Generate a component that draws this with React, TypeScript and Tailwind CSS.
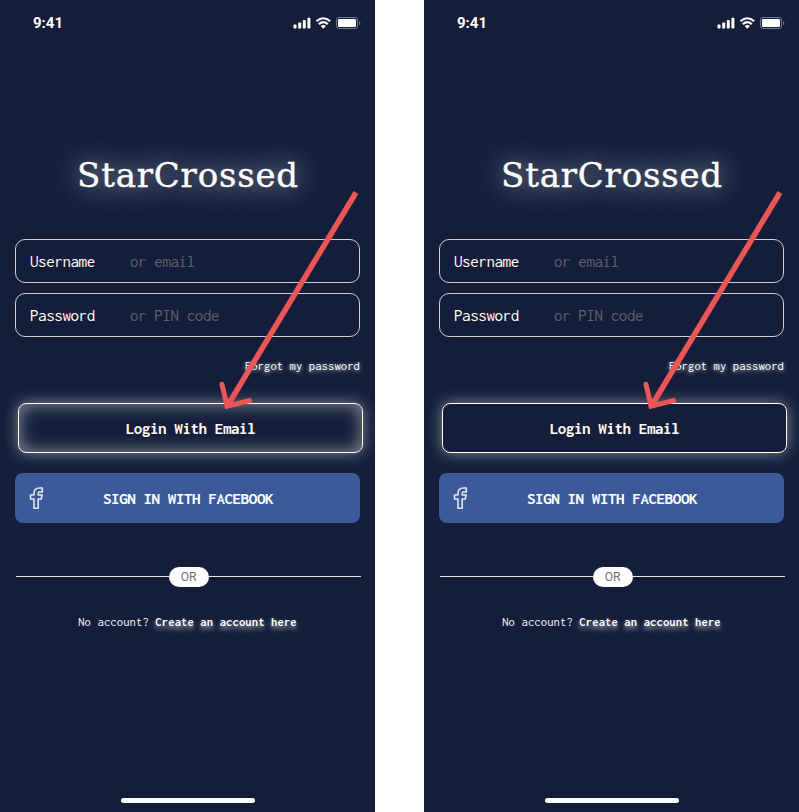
import React from "react";

const mono =
  "font-['Inconsolata','Noto_Sans_Mono_CJK_JP','Noto_Sans_Mono_CJK_SC','DejaVu_Sans_Mono',monospace]";

function StatusBar() {
  return (
    <div className="flex h-[46px] items-center justify-between pl-[33px] pr-[14px]">
      <span className="font-[Roboto,sans-serif] text-[15px] font-bold leading-none">9:41</span>
      <svg width="68" height="14" viewBox="0 0 68 14" fill="none">
        <g fill="#fff">
          <rect x="0.5" y="8.5" width="3" height="4" rx="0.8" />
          <rect x="5.2" y="6.4" width="3" height="6.1" rx="0.8" />
          <rect x="9.8" y="4" width="3" height="8.5" rx="0.8" />
          <rect x="14.4" y="1.8" width="3" height="10.7" rx="0.8" />
        </g>
        <g stroke="#fff" strokeWidth="2.100">
          <path d="M23.400 5.300Q30.300-.8 37.200 5.300" />
          <path d="M25.800 8.100Q30.300 4.200 34.800 8.100" />
        </g>
        <path d="M27.700 10.100Q30.300 8.100 32.900 10.100L30.300 12.800z" fill="#fff" />
        <rect x="43.500" y="1.500" width="21" height="11" rx="2.500" stroke="#fff" strokeOpacity=".4" />
        <path d="M66 5.300v4c.8-.3 1.300-1.100 1.300-2s-.5-1.700-1.300-2z" fill="#fff" fillOpacity=".4" />
        <rect x="45" y="3" width="18" height="8" rx="1.300" fill="#fff" />
      </svg>
    </div>
  );
}

function Field({ label, hint }: { label: string; hint: string }) {
  return (
    <div className="flex h-11 items-center rounded-[10px] border border-[#cdced3] pl-[14px] text-[17px] leading-none tracking-[-0.4px]">
      <span className="w-[100px]">{label}</span>
      <span className="text-[#5c5f6a]">{hint}</span>
    </div>
  );
}

function Arrow() {
  return (
    <svg className="absolute left-0 top-0" width="375" height="420" fill="none" stroke="#ee5656">
      <path d="M356 192.500L228 405" strokeWidth="5.500" />
      <path d="M222 384.300L227 406.300L249.500 400.500" strokeWidth="5" strokeLinecap="round" />
    </svg>
  );
}

function Phone({ inset }: { inset: boolean }) {
  return (
    <section className={`${mono} relative flex h-[812px] w-[375px] flex-col overflow-hidden bg-[#141e3b] text-white`}>
      <StatusBar />
      <h1 className="mt-[104px] flex h-[50px] items-center justify-center whitespace-nowrap pl-px font-['DejaVu_Serif',serif] text-[34px] leading-none tracking-[0.8px] [-webkit-text-stroke:0.4px_white] [text-shadow:0_0_30px_rgba(255,255,255,0.8),0_0_20px_rgba(255,255,255,0.2)]">
        StarCrossed
      </h1>
      <div className="mx-[15px] mt-[39px] flex flex-col gap-[10px]">
        <Field label="Username" hint="or email" />
        <Field label="Password" hint="or PIN code" />
      </div>
      <a className="mr-[15px] mt-[19px] flex h-5 items-center justify-end text-[12.500px] leading-none tracking-[0.150px] [text-shadow:0_1px_4px_rgba(255,255,255,0.8)]">
        Forgot my password
      </a>
      <button
        className={`ml-[18px] mt-[27px] h-[50px] w-[345px] rounded-lg border border-white text-[17px] font-bold leading-none tracking-[-0.4px] ${
          inset
            ? "shadow-[0_0_15px_rgba(255,255,245,0.48),inset_0_0_18px_rgba(255,255,245,0.52)]"
            : "shadow-[0_0_15px_rgba(255,255,245,0.48)]"
        }`}
      >
        Login With Email
      </button>
      <button className="mx-[15px] mt-5 flex h-[50px] items-center rounded-lg bg-[#3c5a99] text-[17px] font-bold leading-none tracking-[-0.4px]">
        <svg className="ml-[14px]" width="15" height="24" viewBox="0 0 15 24" fill="none" stroke="#e3e8f2" strokeWidth="1.600" strokeLinejoin="round">
          <path d="M13.300 2H10.500C7.200 2 5 4 5 7.200V9H1.500v4H5v9.300h4.200V13h3l1-4H9.200V7.500C9.200 6.500 9.700 6 10.700 6h2.600z" />
        </svg>
        <span className="ml-[59px]">SIGN IN WITH FACEBOOK</span>
      </button>
      <div className="ml-4 mt-11 flex h-5 w-[345px] items-center">
        <span className="mb-px h-px flex-1 bg-[#e4e5ea]" />
        <span className="flex h-5 w-10 items-center justify-center rounded-full bg-white font-[Roboto,sans-serif] text-[12px] leading-none tracking-[-0.2px] text-[#6b6e79]">
          OR
        </span>
        <span className="mb-px h-px flex-1 bg-[#e4e5ea]" />
      </div>
      <p className="mt-[25px] flex h-5 items-center justify-center whitespace-pre text-[12.500px] leading-none tracking-[0.180px]">
        <span>No account? </span>
        <b className="[text-shadow:0_3px_5px_rgba(255,255,255,0.7)]">Create an account here</b>
      </p>
      <div className="mb-[9px] ml-[121px] mt-auto h-[5px] w-[134px] rounded-full bg-white" />
      <Arrow />
    </section>
  );
}

export default function App() {
  return (
    <main className="flex h-[812px] w-[799px] justify-between overflow-hidden bg-white">
      <Phone inset />
      <Phone inset={false} />
    </main>
  );
}
